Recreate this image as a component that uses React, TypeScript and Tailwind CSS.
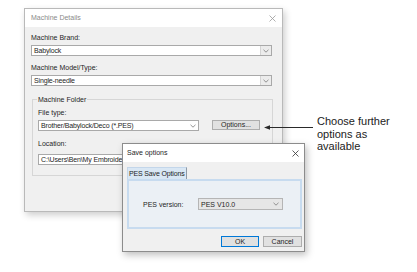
import React from 'react';

function Chevron({ className = '' }: { className?: string }) {
	return (
		<svg width="6" height="4" viewBox="0 0 6 4" className={className}>
			<polyline points="0.5,0.8 3,3.2 5.5,0.8" fill="none" stroke="#7a7a7a" strokeWidth="0.8" />
		</svg>
	);
}

function CloseX({ color }: { color: string }) {
	return (
		<svg width="7" height="7" viewBox="0 0 7 7">
			<line x1="0.5" y1="0.5" x2="6.5" y2="6.5" stroke={color} strokeWidth="0.8" />
			<line x1="6.5" y1="0.5" x2="0.5" y2="6.5" stroke={color} strokeWidth="0.8" />
		</svg>
	);
}

// combo box with a grey drop button at the right end
function Combo({ value, width, boxed }: { value: string; width: string; boxed?: boolean }) {
	return (
		<div className={`${width} h-[11px] mt-[3px] flex items-stretch border border-[#a9a9a9] bg-white`}>
			<span className="flex-1 pl-[2px] leading-[9px] text-[7px] tracking-[-0.15px] text-[#1e1e1e] whitespace-nowrap overflow-hidden">
				{value}
			</span>
			<span
				className={`w-[11px] flex items-center justify-center ${boxed ? 'bg-[#ececec] border-l border-[#d4d4d4]' : ''}`}
			>
				<Chevron />
			</span>
		</div>
	);
}

function Label({ children, className = '' }: { children: React.ReactNode; className?: string }) {
	return <div className={`h-[9px] leading-[9px] text-[7px] text-[#1e1e1e] ${className}`}>{children}</div>;
}

function MachineDetails() {
	return (
		<div className="absolute left-[24px] top-[8px] w-[259px] h-[204px] flex flex-col border border-[#b9b9b9] bg-[#f0f0f0] shadow-[2px_3px_7px_rgba(0,0,0,0.2)]">
			<div className="h-[18px] flex items-center justify-between pl-[6px] pr-[6px] bg-white">
				<span className="text-[7px] text-[#8a8a8a]">Machine Details</span>
				<CloseX color="#9a9a9a" />
			</div>
			<div className="flex flex-col pl-[6px] pt-[6px]">
				<Label>Machine Brand:</Label>
				<Combo value="Babylock" width="w-[241px]" boxed />
				<Label className="mt-[7px]">Machine Model/Type:</Label>
				<Combo value="Single-needle" width="w-[241px]" boxed />
				<div className="relative mt-[13px] ml-[1px] w-[241px] h-[77px] border border-[#d6d6d6] px-[5px] pt-[8px]">
					<span className="absolute -top-[5px] left-[4px] px-[1px] bg-[#f0f0f0] leading-[9px] text-[7px] text-[#1e1e1e]">
						Machine Folder
					</span>
					<Label>File type:</Label>
					<div className="flex items-start gap-[13px]">
						<Combo value="Brother/Babylock/Deco (*.PES)" width="w-[161px]" />
						<button className="mt-[3px] w-[48px] h-[10px] border border-[#adadad] bg-[#e1e1e1] leading-[8px] text-[7px] text-[#1e1e1e]">
							Options...
						</button>
					</div>
					<Label className="mt-[8px]">Location:</Label>
					<div className="mt-[6px] w-[222px] h-[11px] border border-[#a9a9a9] bg-white pl-[2px] leading-[9px] text-[7px] tracking-[-0.15px] text-[#1e1e1e] whitespace-nowrap overflow-hidden">
						C:\Users\Ben\My Embroidery
					</div>
				</div>
			</div>
		</div>
	);
}

function SaveOptions() {
	return (
		<div className="absolute left-[122px] top-[143px] w-[183px] h-[109px] flex flex-col border border-[#8c8c8c] bg-[#f0f0f0] shadow-[2px_3px_7px_rgba(0,0,0,0.25)]">
			<div className="h-[18px] flex items-center justify-between pl-[4px] pr-[5px] bg-white">
				<span className="text-[7px] text-[#1e1e1e]">Save options</span>
				<CloseX color="#333333" />
			</div>
			<div className="flex flex-col pl-[4px] pr-[2px] pt-[5px]">
				<div className="w-[60px] h-[12px] flex items-center pl-[1px] bg-[#d9e7f4] border-t border-l border-[#c3d6ea] border-r border-r-[#8f9aa6] leading-[9px] text-[7px] tracking-[-0.15px] whitespace-nowrap overflow-hidden text-[#1e1e1e]">
					PES Save Options
				</div>
				<div className="w-[175px] h-[50px] border-2 border-[#c7dbef] bg-[#ebf0f5] pl-[14px] pt-[17px]">
					<div className="flex items-center">
						<span className="w-[55px] text-[7px] leading-[9px] text-[#1e1e1e]">PES version:</span>
						<div className="w-[85px] h-[12px] flex items-center justify-between border border-[#b5b5b5] bg-[#e6e6e6] pl-[2px] pr-[3px]">
							<span className="text-[7px] leading-[9px] text-[#1e1e1e]">PES V10.0</span>
							<Chevron />
						</div>
					</div>
				</div>
				<div className="mt-[7px] flex justify-end gap-[4px]">
					<button className="w-[38px] h-[11px] border border-[#0078d7] bg-[#e1e1e1] leading-[9px] text-[7px] text-[#1e1e1e]">
						OK
					</button>
					<button className="w-[39px] h-[11px] border border-[#adadad] bg-[#e1e1e1] leading-[9px] text-[7px] text-[#1e1e1e]">
						Cancel
					</button>
				</div>
			</div>
		</div>
	);
}

export default function App() {
	return (
		<div className="relative w-[417px] h-[272px] overflow-hidden bg-white font-['Liberation_Sans',Arial,sans-serif]">
			<MachineDetails />
			<SaveOptions />
			<svg className="absolute left-[263px] top-[124px]" width="52" height="7" viewBox="0 0 52 7">
				<line x1="6" y1="3.5" x2="50" y2="3.5" stroke="#2a2a2a" strokeWidth="1" />
				<polygon points="1,3.5 7,1.2 7,5.8" fill="#2a2a2a" />
			</svg>
			<div className="absolute left-[317px] top-[115px] text-[11px] leading-[12.5px] text-[#222222]">
				Choose further
				<br />
				options as
				<br />
				available
			</div>
		</div>
	);
}
